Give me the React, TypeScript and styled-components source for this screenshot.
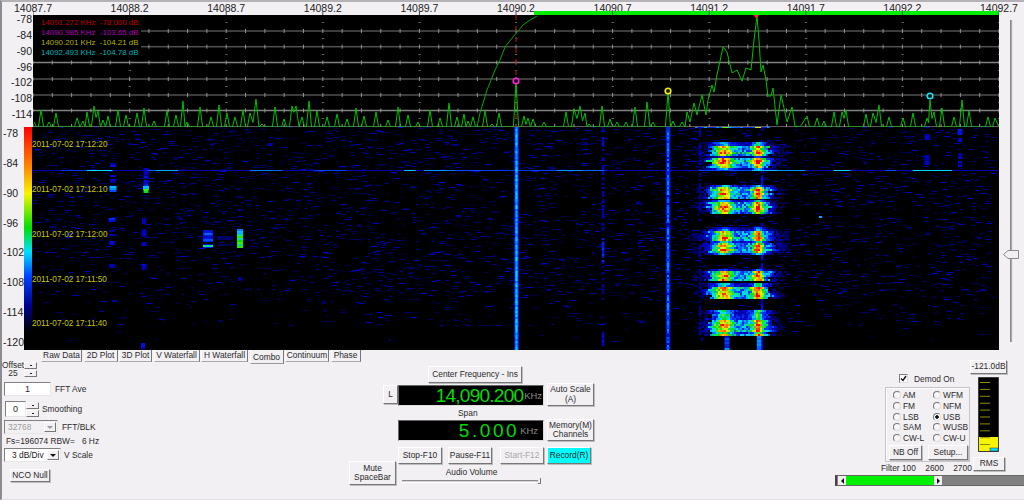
import React from "react";
import styled, { createGlobalStyle } from "styled-components";

const GlobalStyle = createGlobalStyle`
  html, body { margin: 0; padding: 0; background: #f3f0f4; }
  * { box-sizing: border-box; }
`;

/* ---------- data generation ---------- */
function mulberry(a: number) {
  return () => {
    a |= 0; a = (a + 0x6d2b79f5) | 0;
    let t = Math.imul(a ^ (a >>> 15), 1 | a);
    t = (t + Math.imul(t ^ (t >>> 7), 61 | t)) ^ t;
    return ((t ^ (t >>> 14)) >>> 0) / 4294967296;
  };
}
const STOPS: [number, number[]][] = [
  [0, [0, 0, 0]], [0.1, [0, 0, 70]], [0.22, [0, 0, 200]], [0.33, [0, 70, 255]],
  [0.44, [0, 225, 255]], [0.55, [0, 225, 0]], [0.72, [245, 245, 0]], [0.85, [255, 130, 0]], [1, [255, 0, 0]],
];
function heat(v: number) {
  for (let i = 1; i < STOPS.length; i++) {
    if (v <= STOPS[i][0]) {
      const [a, ca] = STOPS[i - 1];
      const [b, cb] = STOPS[i];
      const t = (v - a) / (b - a);
      return `rgb(${ca.map((c, k) => Math.round(c + (cb[k] - c) * t)).join(",")})`;
    }
  }
  return "rgb(255,0,0)";
}
function buildWaterfall() {
  const r = mulberry(20110702);
  const buckets: string[] = Array(61).fill("");
  const put = (x: number, y: number, w: number, h: number, v: number) => {
    const k = Math.max(0, Math.min(60, Math.round(v * 60)));
    buckets[k] += `M${x.toFixed(1)} ${y}h${w.toFixed(1)}v${h}h${(-w).toFixed(1)}z`;
  };
  // background noise
  for (let i = 0; i < 4800; i++) {
    const y = 127 + Math.floor(r() * 215);
    if (y > 325 && r() < 0.9) continue;
    if (y > 295 && r() < 0.55) continue;
    const x = 32 + r() * 960;
    if (x < 300 && y > 260 && r() < 0.5) continue;
    const q = r();
    put(x, y, 2 + r() * 5, 1, 0.09 + q * q * 0.13);
  }
  // dim spectral columns
  const column = (x: number, w: number, y0: number, y1: number, lo: number, hi: number, p = 1) => {
    for (let y = y0; y < y1; y += 2) {
      if (r() > p) continue;
      put(x - w / 2, y, w, 2, lo + r() * (hi - lo));
    }
  };
  column(516.5, 5, 127, 350, 0.22, 0.28);
  column(516.5, 2.4, 127, 350, 0.36, 0.45);
  column(668, 4.5, 127, 350, 0.22, 0.29);
  column(668, 2, 127, 350, 0.32, 0.39, 0.7);
  column(603, 2.5, 127, 232, 0.16, 0.25, 0.6);
  column(603, 2.5, 232, 262, 0.24, 0.31, 0.8);
  column(603, 2.5, 262, 300, 0.14, 0.22, 0.5);
  column(603, 2.5, 330, 346, 0.2, 0.27, 0.9);
  column(700, 2, 127, 335, 0.13, 0.22, 0.6);
  column(702, 2.5, 335, 350, 0.1, 0.16, 0.5);
  column(762, 2.5, 127, 350, 0.16, 0.26, 0.8);
  column(927, 5, 134, 140, 0.18, 0.25, 0.9);
  column(927, 5, 155, 164, 0.18, 0.25, 0.9);
  column(960, 5, 129, 134, 0.24, 0.3);
  column(960, 4, 138, 142, 0.2, 0.25);
  column(960, 4, 151, 166, 0.14, 0.24, 0.7);
  // left side signals
  column(113, 6, 163, 186, 0.15, 0.25, 0.7);
  column(113, 7, 186, 191, 0.3, 0.42);
  column(146, 5, 168, 186, 0.17, 0.27, 0.8);
  column(146, 6, 186, 189, 0.38, 0.44);
  column(146, 5, 189, 193, 0.52, 0.62);
  column(112, 7, 218, 222, 0.18, 0.28);
  column(144, 4, 218, 225, 0.16, 0.25, 0.8);
  column(112, 6, 230, 236, 0.15, 0.23, 0.7);
  column(112, 6, 241, 245, 0.2, 0.28);
  column(144, 5, 229, 236, 0.18, 0.26);
  column(144, 5, 240, 246, 0.18, 0.28, 0.8);
  column(112, 6, 264, 268, 0.16, 0.22);
  column(144, 5, 264, 269, 0.18, 0.25);
  column(208, 10, 230, 248, 0.16, 0.28, 0.8);
  column(208, 8, 233, 235, 0.3, 0.38);
  column(208, 10, 239, 241, 0.34, 0.42);
  column(208, 10, 245, 247, 0.42, 0.5);
  column(225, 16, 236, 247, 0.1, 0.16, 0.5);
  column(240, 6, 229, 234, 0.36, 0.43);
  column(240, 6, 234, 248, 0.48, 0.6);
  column(240, 4, 209, 211, 0.16, 0.2);
  column(240, 4, 277, 280, 0.16, 0.2);
  column(143, 4, 343, 349, 0.2, 0.26);
  put(819, 216, 3, 2, 0.4);
  // carrier line
  for (let x = 32; x < 999; ) {
    const w = 5 + r() * 28;
    put(x, 170, w, 1, r() < 0.4 ? 0.2 : 0.28 + r() * 0.16);
    x += w;
  }
  // voice bursts
  const gauss = (x: number, c: number, s: number) => Math.exp(-(((x - c) / s) ** 2));
  const burst = (y0: number, y1: number, spread = 1) => {
    for (let y = y0; y < y1; y += 2) {
      const t = (y - y0) / (y1 - y0);
      const taper = Math.min(1, t * 6, (1 - t) * 6 + 0.25);
      const gain = (r() < 0.18 ? 0.6 : 1) * (0.85 + 0.3 * r()) * (0.6 + 0.4 * taper);
      const left = 705 + r() * 7;
      const right = 773 - r() * 7;
      for (let x = 688; x < 790; x += 2) {
        const inside = x >= left && x <= right;
        const d = inside ? 0 : x < left ? left - x : x - right;
        const shape = 0.85 + 0.55 * (gauss(x, 723, 16) + gauss(x, 757, 11));
        const base = inside
          ? (0.25 + 0.2 * r()) * shape
          : 0.28 * Math.exp(-d / (11 * spread)) * (r() < 0.65 ? 1 : 0.25);
        const v = (base + 0.34 * gauss(x, 723, 6.5) + 0.46 * gauss(x, 757, 4)) * gain;
        if (v > 0.08) put(x, y, 2, 2, v);
      }
    }
  };
  burst(142, 155, 1.4); burst(156, 169); burst(185, 198); burst(200, 213); burst(227, 255, 1.7);
  burst(269, 281, 1.2); burst(283, 298); burst(310, 336);
  column(727, 5, 336, 350, 0.22, 0.42);
  column(759, 4.5, 336, 350, 0.3, 0.44);
  for (let x = 695; x < 770; x += 3) put(x, 127, 3, 1, 0.2 + 0.2 * r() + 0.3 * gauss(x, 724, 5) + 0.5 * gauss(x, 757, 3));
  return buckets
    .map((d, k) => ({ d, fill: heat(k / 60) }))
    .filter((b) => b.d);
}

const NOISE_A: [number, number][] = [
  [34,122],[41,110],[49,122],[56,113],[77,118],[83,121],[87,112],[94,106],[98,111],[103,120],[108,116],[118,110],[126,115],[137,113],[144,108],[154,121],
  [167,111],[176,115],[183,101],[187,122],[200,107],[211,117],[219,105],[227,113],[235,117],[243,110],[250,113],[256,99],[262,124],[275,107],[284,119],
  [292,106],[296,106],[302,117],[309,101],[317,111],[327,117],[337,114],[347,119],[356,108],[364,116],[376,112],[388,120],[398,107],[408,115],[418,122],[430,110],[440,118],
  [449,103],[457,117],[464,114],[468,121],[473,117],[485,111],[492,124],[499,113],[516,82],[524,116],[528,118],[533,119],[544,122],[566,112],[574,109],[580,106],[585,113],[589,124],
  [602,106],[610,119],[617,122],[626,122],[635,107],[647,102],[653,122],[668,92],[673,121],[682,122],
];
const SIGNAL: [number, number][] = [
  [685,127],[687,112],[690,122],[694,103],[697,115],[702,95],[706,115],[708,100],[712,85],[714,92],[717,75],[723,47],[727,52],[732,73],[737,70],[742,81],[746,68],[751,70],
  [754,40],[757,16],[759,40],[761,72],[763,65],[766,80],[768,96],[771,96],[773,88],[777,125],[781,95],[784,108],[787,122],[792,107],[795,126],
];
const NOISE_B: [number, number][] = [
  [807,116],[817,118],[824,121],[834,112],[842,112],[846,110],[866,114],[873,113],[879,105],[889,117],[903,118],[913,113],[927,118],[930,100],[934,112],[942,108],[954,117],[962,100],[969,111],[988,117],[995,118],
];
function tracePoints(list: [number, number][]) {
  const out: string[] = [];
  list.forEach((p, i) => {
    out.push(`${p[0]},${p[1]}`);
    const n = list[i + 1];
    if (!n) return;
    const gap = n[0] - p[0];
    if (gap >= 7) out.push(`${p[0] + 2.6},127`, `${n[0] - 2.6},127`);
    else out.push(`${(p[0] + n[0]) / 2},${Math.min(127, Math.max(p[1], n[1]) + gap * 1.6)}`);
  });
  return out.join(" ");
}
const TRACE = [tracePoints(NOISE_A), "685,127", SIGNAL.map((p) => p.join(",")).join(" "), "800,127", tracePoints(NOISE_B), "999,127"].join(" ");
const ARC = "477,127 480,113 487,90 495,70 500,60 505,47 513,37 523,25 530,20 537,16";
const GRID_Y = [31, 46.7, 62.5, 79, 95, 110.5];
const MAJOR = Array.from({ length: 11 }, (_, i) => 33 + i * 96.6);
const MINOR = Array.from({ length: 51 }, (_, i) => 33 + i * 19.32);
const DASH_Y = [22, 38, 54, 70, 86, 102, 118];
const WATERFALL = buildWaterfall();

/* ---------- page ---------- */
const Page = styled.div`
  width: 1024px;
  height: 500px;
  overflow: hidden;
  display: flex;
  flex-direction: column;
  background: #f3f0f4;
  border-top: 2px solid #b4b2b6;
  border-left: 2px solid #8c8c90;
  border-bottom: 1px solid #e0dee2;
  color: #2a2a2a;
  font-family: "Liberation Sans", Arial, sans-serif;
  font-size: 8.4px;
`;
const Upper = styled.div`
  display: flex;
  height: 348px;
  flex: none;
`;
const Scope = styled.div`
  width: 997px;
  flex: none;
`;
const XAxis = styled.div`
  display: flex;
  height: 9px;
  margin-left: -17.3px;
`;
const XLabel = styled.div`
  flex: none;
  width: 96.6px;
  text-align: center;
  font-size: 10.5px;
  line-height: 12px;
  color: #222;
`;
const PlotRow = styled.div`
  display: flex;
  height: 116px;
`;
const PlotScale = styled.div`
  width: 31px;
  padding: 1px 1px 0 0;
  text-align: right;
  font-size: 10.5px;
  line-height: 15.85px;
  color: #222;
`;
const PlotArea = styled.div`
  position: relative;
  width: 966px;
  height: 116px;
`;
const PlotSvg = styled.svg`
  display: block;
  width: 966px;
  height: 116px;
`;
const Legend = styled.div`
  position: absolute;
  left: 0;
  top: 4px;
  width: 108px;
  height: 43px;
  padding: 3px 0 0 8px;
  background: #000;
  font-size: 7.9px;
  line-height: 10px;
  white-space: pre;
`;
const LegendLine = styled.div<{ $c: string }>`
  color: ${(p) => p.$c};
`;
const FallRow = styled.div`
  display: flex;
  height: 223px;
`;
const FallScale = styled.div`
  width: 22px;
  margin-top: -8px;
  padding-left: 1px;
  font-size: 10.5px;
  line-height: 29.85px;
  color: #222;
`;
const ColorBar = styled.div`
  width: 8px;
  background: linear-gradient(#ff0000 0%, #ff8000 17%, #f5f500 30%, #00e000 45%, #00e0ff 56%, #0040ff 67%, #000090 80%, #000 92%);
`;
const FallArea = styled.div`
  position: relative;
  width: 967px;
  height: 223px;
  background: #000;
  overflow: hidden;
`;
const FallSvg = styled.svg`
  display: block;
  width: 967px;
  height: 223px;
  filter: blur(0.5px);
`;
const Stamps = styled.div`
  position: absolute;
  left: 0;
  top: -3.6px;
  font-size: 8.2px;
  line-height: 44.75px;
  color: #c6c600;
`;
const Rail = styled.div`
  position: relative;
  flex: 1;
  display: flex;
  justify-content: center;
  padding: 18px 0 8px;
`;
const RailTrack = styled.div`
  width: 3px;
  background: #a8a8a8;
  border-left: 1px solid #8a8a8a;
  border-right: 1px solid #e8e8e8;
`;
const RailThumb = styled.svg`
  position: absolute;
  left: 4px;
  top: 248px;
`;

/* ---------- shared controls ---------- */
const Btn = styled.button<{ $w: number; $h: number; $on?: boolean; $off?: boolean }>`
  flex: none;
  width: ${(p) => p.$w}px;
  height: ${(p) => p.$h}px;
  padding: 0;
  font: 8.4px/9.5px "Liberation Sans", Arial, sans-serif;
  color: ${(p) => (p.$off ? "#a8a8a8" : "#2a2a2a")};
  background: ${(p) => (p.$on ? "#00ffff" : "#f3f0f4")};
  border: 1px solid;
  border-color: #fff #777 #777 #fff;
  box-shadow: 1px 1px 0 #bdbdbd;
`;
const Inset = styled.div<{ $w: number; $h: number; $bg?: string }>`
  flex: none;
  width: ${(p) => p.$w}px;
  height: ${(p) => p.$h}px;
  display: flex;
  align-items: center;
  justify-content: center;
  background: ${(p) => p.$bg ?? "#fff"};
  border: 1px solid;
  border-color: #808080 #e8e8e8 #e8e8e8 #808080;
  font-size: 9px;
`;
const Spinner = styled.div`
  flex: none;
  display: flex;
  flex-direction: column;
  width: 13px;
  gap: 1px;
`;
const SpinBtn = styled.div`
  height: 7px;
  background: #f3f0f4;
  border: 1px solid;
  border-color: #fff #777 #777 #fff;
  display: flex;
  align-items: center;
  justify-content: center;
  &::after {
    content: "";
    width: 2px;
    height: 1px;
    background: #222;
  }
`;
const ComboArrow = styled.div<{ $off?: boolean }>`
  position: absolute;
  right: 1px;
  top: 1px;
  bottom: 1px;
  width: 12px;
  background: #f3f0f4;
  border: 1px solid;
  border-color: #fff #777 #777 #fff;
  display: flex;
  align-items: center;
  justify-content: center;
  &::after {
    content: "";
    border: 3px solid transparent;
    border-bottom-width: 0;
    border-top-color: ${(p) => (p.$off ? "#999" : "#111")};
  }
`;
const Combo = styled(Inset)<{ $pad: number; $grey?: boolean }>`
  position: relative;
  justify-content: flex-start;
  padding-left: ${(p) => p.$pad}px;
  font-size: 8.4px;
  color: ${(p) => (p.$grey ? "#9c9c9c" : "#222")};
`;

/* ---------- bottom panel ---------- */
const Tabs = styled.div`
  display: flex;
  align-items: flex-start;
  gap: 1.5px;
  height: 10px;
  margin-left: 39px;
`;
const Tab = styled.div<{ $w: number; $on?: boolean }>`
  position: relative;
  flex: none;
  width: ${(p) => p.$w}px;
  height: ${(p) => (p.$on ? 14 : 12)}px;
  padding-top: ${(p) => (p.$on ? 2 : 0)}px;
  text-align: center;
  line-height: 10px;
  background: #f3f0f4;
  border-right: 1px solid #777;
  border-bottom: 1px solid ${(p) => (p.$on ? "#999" : "#aaa")};
  border-left: 1px solid #fff;
`;
const Controls = styled.div`
  display: flex;
  align-items: flex-start;
  flex: 1;
`;
const LeftCol = styled.div`
  flex: none;
  width: 100px;
  padding-top: 1px;
`;
const Row = styled.div<{ $top?: number; $left?: number; $gap?: number }>`
  display: flex;
  align-items: center;
  margin-top: ${(p) => p.$top ?? 0}px;
  margin-left: ${(p) => p.$left ?? 0}px;
  gap: ${(p) => p.$gap ?? 0}px;
  white-space: pre;
`;
const OffsetText = styled.div`
  width: 22px;
  text-align: center;
  line-height: 8px;
`;
const CenterCol = styled.div`
  flex: none;
  width: 246px;
  margin-left: 247px;
  display: grid;
  grid-template-columns: 34px 15px 146px 3px 47px;
  grid-template-rows: 6px 17px 23px 13px 22px 6px 14px 3px 21px;
`;
const FreqBtn = styled(Btn)`
  grid-column: 3;
  grid-row: 2;
  margin-left: 30px;
`;
const LockBtn = styled(Btn)`
  grid-column: 2;
  grid-row: 3;
  margin-top: 2px;
`;
const Readout = styled.div<{ $row: number; $top: number; $pad: number }>`
  grid-column: 3;
  grid-row: ${(p) => p.$row};
  margin-top: ${(p) => p.$top}px;
  height: 21px;
  display: flex;
  justify-content: flex-end;
  align-items: center;
  padding-right: ${(p) => p.$pad}px;
  background: #000;
  border: 1px solid;
  border-color: #666 #ddd #ddd #666;
`;
const ReadoutValue = styled.span<{ $sp: number }>`
  font-size: 19px;
  letter-spacing: ${(p) => p.$sp}px;
  color: #00dc00;
`;
const ReadoutUnit = styled.span<{ $left: number }>`
  margin-left: ${(p) => p.$left}px;
  font-size: 9.4px;
  color: #8c8c8c;
`;
const SideBtn = styled(Btn)<{ $row: string }>`
  grid-column: 5;
  grid-row: ${(p) => p.$row};
`;
const SpanLabel = styled.div`
  grid-column: 3;
  grid-row: 4;
  align-self: end;
  padding-left: 60px;
  line-height: 11px;
`;
const TransportRow = styled.div`
  grid-column: 3;
  grid-row: 7 / 9;
  display: flex;
  gap: 6px;
  & > :nth-child(3) {
    margin-left: 2px;
  }
`;
const MuteBtn = styled(Btn)`
  grid-column: 1 / 4;
  grid-row: 8 / 10;
`;
const Volume = styled.div`
  grid-column: 3;
  grid-row: 9;
  display: flex;
  flex-direction: column;
  align-items: center;
  padding: 3px 3px 0 4px;
`;
const VolumeTrack = styled.div`
  position: relative;
  align-self: stretch;
  height: 3px;
  margin-top: 3px;
  background: #d4d2d6;
  border-top: 1px solid #8a8a8a;
  border-bottom: 1px solid #fff;
`;
const VolumeThumb = styled.div`
  position: absolute;
  right: 0;
  top: -3px;
  width: 3px;
  height: 6px;
  background: #f3f0f4;
  border-right: 1px solid #777;
  border-bottom: 1px solid #777;
`;
const RightCol = styled.div`
  flex: none;
  width: 189px;
  margin-left: 240px;
`;
const RightTop = styled.div`
  display: flex;
  height: 115px;
  padding-left: 46px;
`;
const DemodCol = styled.div`
  flex: none;
  width: 89px;
  padding-top: 14px;
`;
const DemodToggle = styled.div`
  display: flex;
  align-items: center;
  gap: 6px;
  height: 9px;
  margin-left: 18px;
`;
const CheckBox = styled.svg`
  flex: none;
  background: #fff;
  border: 1px solid;
  border-color: #808080 #ddd #ddd #808080;
`;
const ModeGroup = styled.div`
  width: 85px;
  height: 75px;
  margin: 4px 0 0 4px;
  padding: 2px 0 0 7px;
  border: 1px solid #c6c4c8;
  box-shadow: inset 1px 1px 0 #fff;
`;
const ModeGrid = styled.div`
  display: grid;
  grid-template-columns: 40px 38px;
  grid-auto-rows: 10.7px;
`;
const ModeItem = styled.div`
  display: flex;
  align-items: center;
  gap: 2px;
`;
const Radio = styled.span<{ $on?: boolean }>`
  flex: none;
  width: 8px;
  height: 8px;
  border-radius: 50%;
  background: ${(p) => (p.$on ? "radial-gradient(circle, #111 0 1.5px, #fff 2px)" : "#f8f6f9")};
  border: 1px solid;
  border-color: #777 #ddd #ddd #777;
`;
const ModeButtons = styled.div`
  display: flex;
  gap: 6px;
  margin: 2px 0 0 -4px;
`;
const FilterRow = styled.div`
  margin-top: 1px;
  line-height: 10px;
  white-space: pre;
`;
const MeterCol = styled.div`
  flex: none;
  display: flex;
  flex-direction: column;
  align-items: flex-start;
`;
const MeterSvg = styled.svg`
  display: block;
  margin: 3px 0 0 8px;
`;
const RmsBtn = styled(Btn)`
  margin: 5px 0 0 3px;
`;
const HScroll = styled.div`
  display: flex;
  height: 11px;
  background: #808080;
  border-left: 2px solid #444;
  border-top: 1px solid #666;
  border-bottom: 1px solid #666;
  padding-left: 1px;
`;
const HArrow = styled.div<{ $right?: boolean }>`
  flex: none;
  width: 8px;
  background: #f3f0f4;
  display: flex;
  align-items: center;
  justify-content: center;
  &::after {
    content: "";
    border: 3px solid transparent;
    ${(p) => (p.$right ? "border-right-width:0;border-left-color:#111;" : "border-left-width:0;border-right-color:#111;")}
  }
`;
const HFill = styled.div`
  flex: none;
  width: 88px;
  background: #00f000;
`;

const TABS: [string, number][] = [
  ["Raw Data", 41], ["2D Plot", 34], ["3D Plot", 33], ["V Waterfall", 46], ["H Waterfall", 47], ["Combo", 34], ["Continuum", 44], ["Phase", 30],
];
const MODES: [string, boolean?][] = [
  ["AM"], ["WFM"], ["FM"], ["NFM"], ["LSB"], ["USB", true], ["SAM"], ["WUSB"], ["CW-L"], ["CW-U"],
];
const TICK_Y = Array.from({ length: 9 }, (_, i) => 5 + i * 6.9);

export default function App() {
  return (
    <>
      <GlobalStyle />
      <Page>
        <Upper>
          <Scope>
            <XAxis>
              {["14087.7","14088.2","14088.7","14089.2","14089.7","14090.2","14090.7","14091.2","14091.7","14092.2","14092.7"].map((t) => (
                <XLabel key={t}>{t}</XLabel>
              ))}
            </XAxis>
            <PlotRow>
              <PlotScale>
                {["-78","-84","-90","-96","-102","-108","-114"].map((t) => <div key={t}>{t}</div>)}
              </PlotScale>
              <PlotArea>
                <PlotSvg viewBox="33 11 966 116">
                  <rect x="33" y="15" width="966" height="112" fill="#000" />
                  <rect x="534" y="11" width="465" height="4" fill="#00ee00" />
                  {MAJOR.map((x) => <rect key={x} x={x - 0.5} y="11.5" width="1" height="3.5" fill="#444" />)}
                  {GRID_Y.map((y, i) => (
                    <rect key={y} x="33" y={y - 0.75} width="966" height="1.5" fill={i === 2 || i === 5 ? "#828282" : "#505050"} />
                  ))}
                  {GRID_Y.map((y) => MINOR.map((x) => (
                    <rect key={`${x}-${y}`} x={x - 0.5} y={y - 2} width="1" height="4" fill="#929292" />
                  )))}
                  {MAJOR.slice(1).map((x) => DASH_Y.map((y) => (
                    <rect key={`${x}-${y}`} x={x - 1} y={y} width="2.4" height="1" fill="#606060" />
                  )))}
                  <rect x="33" y="126" width="966" height="1.5" fill="#5c5c5c" />
                  {MINOR.map((x) => <rect key={x} x={x - 0.5} y="124" width="1" height="3" fill="#999" />)}
                  <line x1="516" y1="15" x2="516" y2="127" stroke="#a01010" strokeWidth="1.2" strokeDasharray="5 6" />
                  <polyline points={ARC} fill="none" stroke="#00a800" strokeWidth="1" />
                  <polyline points={TRACE} fill="none" stroke="#00c000" strokeWidth="1" strokeLinejoin="round" />
                  <circle cx="516" cy="81" r="2.8" fill="#200020" stroke="#ff20d0" strokeWidth="1.6" />
                  <circle cx="668" cy="91" r="2.8" fill="#202000" stroke="#f0f000" strokeWidth="1.6" />
                  <circle cx="930" cy="96" r="2.8" fill="#002020" stroke="#20e0f0" strokeWidth="1.6" />
                  <path d="M753.5 15 L759 15 L756.2 18.5 Z" fill="#ff2020" />
                </PlotSvg>
                <Legend>
                  <LegendLine $c="#c00000">14091.272 KHz  -78.000 dB</LegendLine>
                  <LegendLine $c="#b000b8">14090.985 KHz  -103.65 dB</LegendLine>
                  <LegendLine $c="#b0b000">14090.201 KHz  -104.21 dB</LegendLine>
                  <LegendLine $c="#00b0b8">14092.493 KHz  -104.78 dB</LegendLine>
                </Legend>
              </PlotArea>
            </PlotRow>
            <FallRow>
              <FallScale>
                {["-78","-84","-90","-96","-102","-108","-114","-120"].map((t) => <div key={t}>{t}</div>)}
              </FallScale>
              <ColorBar />
              <FallArea>
                <FallSvg viewBox="32 127 967 223">
                  {WATERFALL.map((b) => <path key={b.fill} d={b.d} fill={b.fill} />)}
                </FallSvg>
                <Stamps>
                  {["17:12:20","17:12:10","17:12:00","17:11:50","17:11:40"].map((t) => <div key={t}>2011-07-02 {t}</div>)}
                </Stamps>
              </FallArea>
            </FallRow>
          </Scope>
          <Rail>
            <RailTrack />
            <RailThumb width="16" height="9" viewBox="0 0 16 9">
              <path d="M0.5 4.5 L5 0.5 H15.5 V8.5 H5 Z" fill="#f3f0f4" stroke="#8a8a8a" />
            </RailThumb>
          </Rail>
        </Upper>
        <Tabs>
          {TABS.map(([t, w]) => <Tab key={t} $w={w} $on={t === "Combo"}>{t}</Tab>)}
        </Tabs>
        <Controls>
          <LeftCol>
            <Row>
              <OffsetText>Offset<br />25</OffsetText>
              <Spinner><SpinBtn /><SpinBtn /></Spinner>
            </Row>
            <Row $top={5} $left={2} $gap={4}>
              <Inset $w={47} $h={14}>1</Inset>FFT Ave
            </Row>
            <Row $top={5} $left={3} $gap={3}>
              <Row>
                <Inset $w={21} $h={16}>0</Inset>
                <Spinner><SpinBtn /><SpinBtn /></Spinner>
              </Row>
              Smoothing
            </Row>
            <Row $top={3} $left={2} $gap={4}>
              <Combo $w={54} $h={14} $pad={3} $grey $bg="#f3f0f4">32768<ComboArrow $off /></Combo>FFT/BLK
            </Row>
            <Row $top={2} $left={4}>Fs=196074 RBW=   6 Hz</Row>
            <Row $top={2} $left={2} $gap={3}>
              <Combo $w={57} $h={14} $pad={7}>3 dB/Div<ComboArrow /></Combo>V Scale
            </Row>
            <Row $top={7} $left={8}>
              <Btn $w={40} $h={13}>NCO Null</Btn>
            </Row>
          </LeftCol>
          <CenterCol>
            <FreqBtn $w={94} $h={17}>Center Frequency - Ins</FreqBtn>
            <LockBtn $w={15} $h={19}>L</LockBtn>
            <Readout $row={3} $top={2} $pad={1}>
              <ReadoutValue $sp={-0.75}>14,090.200</ReadoutValue>
              <ReadoutUnit $left={1}>KHz</ReadoutUnit>
            </Readout>
            <SideBtn $row="3" $w={47} $h={23}>Auto Scale<br />(A)</SideBtn>
            <SpanLabel>Span</SpanLabel>
            <Readout $row={5} $top={1} $pad={5}>
              <ReadoutValue $sp={2.6}>5.000</ReadoutValue>
              <ReadoutUnit $left={1}>KHz</ReadoutUnit>
            </Readout>
            <SideBtn $row="5" $w={47} $h={22}>Memory(M)<br />Channels</SideBtn>
            <TransportRow>
              <Btn $w={44} $h={17}>Stop-F10</Btn>
              <Btn $w={44} $h={17}>Pause-F11</Btn>
              <Btn $w={44} $h={17} $off>Start-F12</Btn>
            </TransportRow>
            <SideBtn $row="7 / 9" $w={44} $h={17} $on>Record(R)</SideBtn>
            <MuteBtn $w={47} $h={24}>Mute<br />SpaceBar</MuteBtn>
            <Volume>
              Audio Volume
              <VolumeTrack><VolumeThumb /></VolumeTrack>
            </Volume>
          </CenterCol>
          <RightCol>
            <RightTop>
              <DemodCol>
                <DemodToggle>
                  <CheckBox width="9" height="9" viewBox="0 0 7 7">
                    <path d="M1 3.5 L3 5.5 L6 1" fill="none" stroke="#111" strokeWidth="1.4" />
                  </CheckBox>
                  Demod On
                </DemodToggle>
                <ModeGroup>
                  <ModeGrid>
                    {MODES.map(([m, on]) => (
                      <ModeItem key={m}><Radio $on={on} />{m}</ModeItem>
                    ))}
                  </ModeGrid>
                  <ModeButtons>
                    <Btn $w={33} $h={15}>NB Off</Btn>
                    <Btn $w={40} $h={15}>Setup...</Btn>
                  </ModeButtons>
                </ModeGroup>
                <FilterRow>Filter 100    2600    2700</FilterRow>
              </DemodCol>
              <MeterCol>
                <Btn $w={37} $h={14}>-121.0dB</Btn>
                <MeterSvg width="21" height="75" viewBox="0 0 21 75">
                  <rect width="21" height="75" fill="#000" stroke="#777" />
                  <rect x="1" y="60" width="19" height="14" fill="#f5f500" />
                  {TICK_Y.map((y) => <rect key={y} x="2" y={y} width="10" height="1" fill="#8c8c00" />)}
                  <rect x="2" y="67" width="10" height="1" fill="#8c8c00" />
                  <rect x="12" y="71" width="8" height="3" fill="#00e0ff" stroke="#333" strokeWidth="0.5" />
                </MeterSvg>
                <RmsBtn $w={32} $h={14}>RMS</RmsBtn>
              </MeterCol>
            </RightTop>
            <HScroll>
              <HArrow />
              <HFill />
              <HArrow $right />
            </HScroll>
          </RightCol>
        </Controls>
      </Page>
    </>
  );
}
